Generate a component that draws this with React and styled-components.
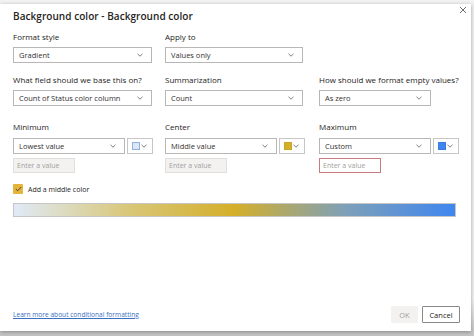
import React from "react";
import styled, { createGlobalStyle } from "styled-components";

const Global = createGlobalStyle`
  html, body { margin: 0; padding: 0; }
  body {
    width: 474px; height: 336px; overflow: hidden;
    background: #c9c9c9;
    font-family: "Open Sans", "Noto Sans", sans-serif;
    color: #252423;
  }
  #root { width: 474px; height: 336px; }
`;

const Backdrop = styled.div`
  width: 474px; height: 336px;
  background: linear-gradient(#f3f3f3 0, #f3f3f3 300px, #c4c4c4 336px);
  padding-top: 4px;
  box-sizing: border-box;
`;

const Dialog = styled.div`
  width: 471px; height: 327px;
  background: #fff;
  box-shadow: 0 1px 4px rgba(0,0,0,0.35);
  display: flex; flex-direction: column;
  box-sizing: border-box;
  padding: 3px 0 8px 13px;
  position: relative;
`;

const Header = styled.div`
  display: flex; align-items: center; height: 18px;
`;

const Title = styled.h1`
  margin: 0; font-size: 10px; font-weight: 600; line-height: 18px; color: #252423;
  letter-spacing: 0.05px;
`;

const Close = styled.button`
  position: absolute; top: 0px; right: 2px;
  width: 12px; height: 12px; padding: 0; border: 0; background: none;
  display: flex; align-items: center; justify-content: center;
`;

const Body = styled.div`
  flex: 1; display: flex; flex-direction: column;
`;

const Grid = styled.div`
  display: grid;
  grid-template-columns: 152px 154px 1fr;
  margin-top: ${p => p.$top}px;
`;

const Field = styled.div`
  display: flex; flex-direction: column; align-items: flex-start;
`;

const Label = styled.div`
  font-size: 8px; line-height: 11px; margin-bottom: ${p => p.$gap || 5}px; color: #252423;
`;

const Row = styled.div`
  display: flex; gap: 2px;
`;

const Select = styled.div`
  width: ${p => p.$w}px; height: 16px; box-sizing: border-box;
  border: 1px solid #b9b7b5; background: #fff;
  display: flex; align-items: center; justify-content: space-between;
  padding: 0 8px 0 5px;
  font-size: 7.5px; color: #323130;
`;

const Swatch = styled.div`
  width: 26px; height: 16px; box-sizing: border-box;
  border: 1px solid #c8c6c4; background: #fff;
  display: flex; align-items: center; justify-content: space-between;
  padding: 0 5px 0 4px;
`;

const Chip = styled.span`
  width: 8px; height: 8px; box-sizing: border-box;
  background: ${p => p.$c}; border: 1px solid ${p => p.$b};
`;

const Input = styled.div`
  margin-top: 4px;
  width: 62px; height: 15px; box-sizing: border-box;
  border: 1px solid ${p => (p.$error ? "#c97b7e" : "#e1dfdd")};
  background: ${p => (p.$error ? "#fff" : "#f3f2f1")};
  display: flex; align-items: center; padding-left: 3px;
  font-size: 7px; color: #a19f9d;
`;

const CheckRow = styled.label`
  display: flex; align-items: center; gap: 5px; margin-top: 11px;
  font-size: 7px; color: #252423;
`;

const Box = styled.span`
  width: 10px; height: 10px; background: #e4b53a; border-radius: 1px;
  display: flex; align-items: center; justify-content: center;
`;

const GradientBar = styled.div`
  margin-top: 9px;
  width: 443px; height: 14px; box-sizing: border-box;
  border: 1px solid #c8c6c4;
  background: linear-gradient(90deg, #e0eaf8 0%, #d9c87c 25%, #d4af2a 50%, #7ea0b8 75%, #3f86f0 100%);
`;

const Footer = styled.div`
  display: flex; align-items: center; justify-content: space-between;
  padding-right: 11px;
`;

const Link = styled.a`
  font-size: 6.6px; color: #3a6fc4; text-decoration: underline;
`;

const Buttons = styled.div`
  display: flex; gap: 4px;
`;

const Button = styled.button`
  height: 17px; box-sizing: border-box; padding: 0;
  width: ${p => p.$w}px;
  font-family: inherit; font-size: 7.5px;
  background: ${p => (p.$disabled ? "#f3f2f1" : "#fff")};
  color: ${p => (p.$disabled ? "#a19f9d" : "#252423")};
  border: 1px solid ${p => (p.$disabled ? "#f3f2f1" : "#8a8886")};
  border-radius: 1px;
`;

const Chevron = () => (
  <svg width="6" height="4" viewBox="0 0 6 4">
    <path d="M0.5 0.8 L3 3.2 L5.5 0.8" fill="none" stroke="#605e5c" strokeWidth="0.8" />
  </svg>
);

const Drop = ({ w, children }) => (
  <Select $w={w}>
    <span>{children}</span>
    <Chevron />
  </Select>
);

const ColorPick = ({ c, b }) => (
  <Swatch>
    <Chip $c={c} $b={b} />
    <Chevron />
  </Swatch>
);

export default function App() {
  return (
    <>
      <Global />
      <Backdrop>
        <Dialog>
          <Header>
            <Title>Background color - Background color</Title>
          </Header>
          <Close aria-label="Close">
            <svg width="8" height="8" viewBox="0 0 8 8">
              <path d="M1 1 L7 7 M7 1 L1 7" stroke="#605e5c" strokeWidth="0.9" />
            </svg>
          </Close>
          <Body>
            <Grid $top={6}>
              <Field>
                <Label>Format style</Label>
                <Drop w={139}>Gradient</Drop>
              </Field>
              <Field>
                <Label>Apply to</Label>
                <Drop w={138}>Values only</Drop>
              </Field>
            </Grid>
            <Grid $top={11}>
              <Field>
                <Label>What field should we base this on?</Label>
                <Drop w={139}>Count of Status color column</Drop>
              </Field>
              <Field>
                <Label>Summarization</Label>
                <Drop w={138}>Count</Drop>
              </Field>
              <Field>
                <Label>How should we format empty values?</Label>
                <Drop w={112}>As zero</Drop>
              </Field>
            </Grid>
            <Grid $top={15}>
              <Field>
                <Label $gap={6}>Minimum</Label>
                <Row>
                  <Drop w={112}>Lowest value</Drop>
                  <ColorPick c="#dde8f7" b="#8fb0e0" />
                </Row>
                <Input>Enter a value</Input>
              </Field>
              <Field>
                <Label $gap={6}>Center</Label>
                <Row>
                  <Drop w={112}>Middle value</Drop>
                  <ColorPick c="#d4af2a" b="#c9a424" />
                </Row>
                <Input>Enter a value</Input>
              </Field>
              <Field>
                <Label $gap={6}>Maximum</Label>
                <Row>
                  <Drop w={112}>Custom</Drop>
                  <ColorPick c="#3f86f0" b="#3a7de0" />
                </Row>
                <Input $error>Enter a value</Input>
              </Field>
            </Grid>
            <CheckRow>
              <Box>
                <svg width="7" height="6" viewBox="0 0 7 6">
                  <path d="M0.8 3 L2.7 4.8 L6.2 1" fill="none" stroke="#3b3a39" strokeWidth="0.9" />
                </svg>
              </Box>
              Add a middle color
            </CheckRow>
            <GradientBar />
          </Body>
          <Footer>
            <Link href="#">Learn more about conditional formatting</Link>
            <Buttons>
              <Button $w={27} $disabled>OK</Button>
              <Button $w={38}>Cancel</Button>
            </Buttons>
          </Footer>
        </Dialog>
      </Backdrop>
    </>
  );
}
